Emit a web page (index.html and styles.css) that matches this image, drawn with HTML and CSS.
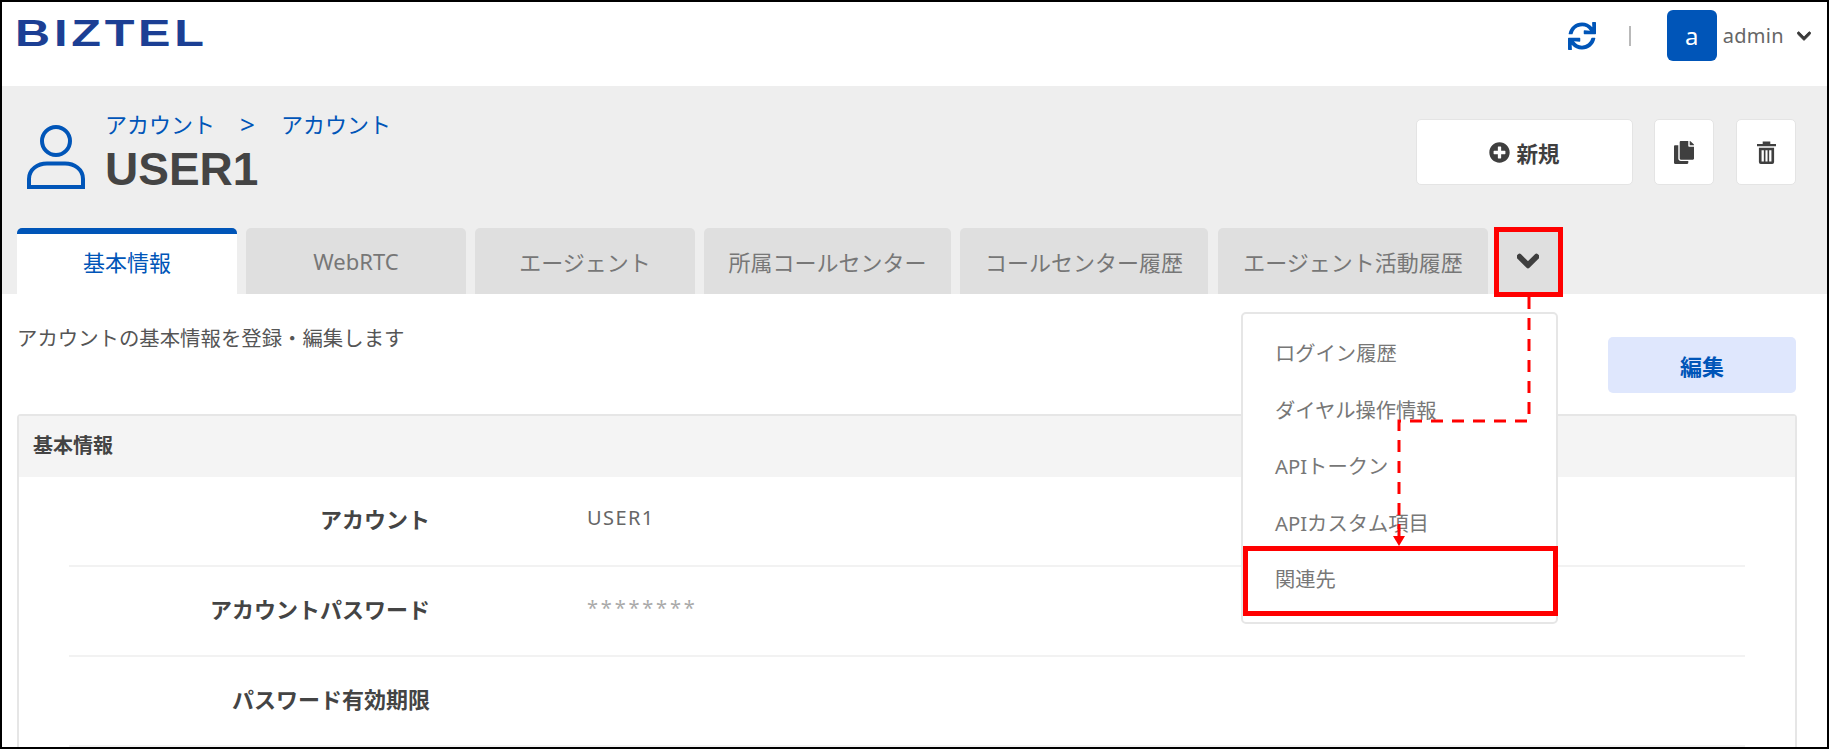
FILE: index.html
```html
<!DOCTYPE html>
<html lang="ja">
<head>
<meta charset="utf-8">
<title>BIZTEL</title>
<link rel="stylesheet" href="styles.css">
</head>
<body>
<div class="frame">
  <header class="topbar">
    <div class="logo"><span class="logo-text">BIZTEL</span></div>
    <div class="top-actions">
      <svg class="sync" viewBox="0 0 512 512"><path d="M440.65 12.57l4 82.77A247.16 247.16 0 0 0 255.83 8C134.73 8 33.91 94.92 12.29 209.82A12 12 0 0 0 24.09 224h49.05a12 12 0 0 0 11.67-9.26 175.91 175.91 0 0 1 317-56.94l-101.46-4.86a12 12 0 0 0-12.57 12v47.41a12 12 0 0 0 12 12H500a12 12 0 0 0 12-12V12a12 12 0 0 0-12-12h-47.37a12 12 0 0 0-11.98 12.57zM255.83 432a175.61 175.61 0 0 1-146-77.8l101.8 4.87a12 12 0 0 0 12.57-12v-47.4a12 12 0 0 0-12-12H12a12 12 0 0 0-12 12V500a12 12 0 0 0 12 12h47.35a12 12 0 0 0 12-12.6l-4.15-82.57A247.17 247.17 0 0 0 255.83 504c121.11 0 221.93-86.92 243.55-201.82a12 12 0 0 0-11.8-14.18h-49.05a12 12 0 0 0-11.67 9.26A175.86 175.86 0 0 1 255.83 432z"/></svg>
      <span class="sep"></span>
      <span class="avatar">a</span>
      <span class="username">admin</span>
      <svg class="chev-small" viewBox="0 0 448 512"><path d="M207.029 381.476L12.686 187.132c-9.373-9.373-9.373-24.569 0-33.941l22.667-22.667c9.357-9.357 24.522-9.375 33.901-.04L224 284.505l154.745-154.021c9.379-9.335 24.544-9.317 33.901.04l22.667 22.667c9.373 9.373 9.373 24.569 0 33.941L240.971 381.476c-9.373 9.372-24.569 9.372-33.942 0z"/></svg>
    </div>
  </header>

  <section class="band">
    <div class="title-row">
      <div class="title-left">
        <svg class="person" viewBox="0 0 58 64"><circle cx="29" cy="16" r="14" /><path d="M2 62V54C2 44 11 38.5 20 38.5H38C47 38.5 56 44 56 54V62Z"/></svg>
        <div class="title-text">
          <div class="crumbs"><span>アカウント</span><span class="crumb-sep">&gt;</span><span>アカウント</span></div>
          <h1 class="title">USER1</h1>
        </div>
      </div>
      <div class="title-buttons">
        <button class="btn btn-new"><svg class="plus" viewBox="0 0 512 512"><path d="M256 8C119 8 8 119 8 256s111 248 248 248 248-111 248-248S393 8 256 8zm144 276c0 6.6-5.4 12-12 12h-92v92c0 6.6-5.4 12-12 12h-56c-6.6 0-12-5.4-12-12v-92h-92c-6.6 0-12-5.4-12-12v-56c0-6.6 5.4-12 12-12h92v-92c0-6.6 5.4-12 12-12h56c6.6 0 12 5.4 12 12v92h92c6.6 0 12 5.4 12 12v56z"/></svg>新規</button>
        <button class="btn btn-icon"><svg class="copy" viewBox="0 0 448 512"><path d="M320 448v40c0 13.255-10.745 24-24 24H24c-13.255 0-24-10.745-24-24V120c0-13.255 10.745-24 24-24h72v296c0 30.879 25.121 56 56 56h168zm0-344V0H152c-13.255 0-24 10.745-24 24v368c0 13.255 10.745 24 24 24h272c13.255 0 24-10.745 24-24V128H344c-13.2 0-24-10.8-24-24zm120.971-31.029L375.029 7.029A24 24 0 0 0 358.059 0H352v96h96v-6.059a24 24 0 0 0-7.029-16.97z"/></svg></button>
        <button class="btn btn-icon"><svg class="trash" viewBox="0 0 20 24"><path fill-rule="evenodd" d="M6 .5H14V3H20V5.5H0V3H6ZM2 7H18V22A2 2 0 0 1 16 24H4A2 2 0 0 1 2 22ZM4.8 9.5V21.5H7.2V9.5ZM8.9 9.5V21.5H11.1V9.5ZM12.8 9.5V21.5H15.2V9.5Z"/></svg></button>
      </div>
    </div>
    <nav class="tabs">
      <a class="tab tab-active">基本情報</a>
      <a class="tab">WebRTC</a>
      <a class="tab">エージェント</a>
      <a class="tab tab-shop">所属コールセンター</a>
      <a class="tab tab-hist">コールセンター履歴</a>
      <a class="tab tab-agent">エージェント活動履歴</a>
      <a class="tab tab-more"><svg class="chev-big" viewBox="0 0 448 512"><path d="M207.029 381.476L12.686 187.132c-9.373-9.373-9.373-24.569 0-33.941l22.667-22.667c9.357-9.357 24.522-9.375 33.901-.04L224 284.505l154.745-154.021c9.379-9.335 24.544-9.317 33.901.04l22.667 22.667c9.373 9.373 9.373 24.569 0 33.941L240.971 381.476c-9.373 9.372-24.569 9.372-33.942 0z"/></svg></a>
    </nav>
  </section>

  <main class="content">
    <div class="intro-row">
      <p class="intro">アカウントの基本情報を登録・編集します</p>
      <button class="btn-edit">編集</button>
    </div>
    <section class="panel">
      <h2 class="panel-head">基本情報</h2>
      <div class="panel-body">
        <div class="row"><div class="label">アカウント</div><div class="value">USER1</div></div>
        <div class="row"><div class="label">アカウントパスワード</div><div class="value value-mask">********</div></div>
        <div class="row"><div class="label">パスワード有効期限</div><div class="value"></div></div>
      </div>
    </section>
  </main>

  <ul class="menu">
    <li>ログイン履歴</li>
    <li>ダイヤル操作情報</li>
    <li>APIトークン</li>
    <li>APIカスタム項目</li>
    <li>関連先</li>
  </ul>
  <span class="mark mark-more"></span>
  <span class="mark mark-item"></span>
  <svg class="route" viewBox="0 0 1829 749">
    <path class="route-line" d="M1529 297V421H1399V536"/>
    <path class="route-head" d="M1393 536H1405L1399 546Z"/>
  </svg>
</div>
</body>
</html>
```
FILE: styles.css
```css
* { box-sizing: border-box; }
html, body { margin: 0; padding: 0; }
body { font-family: "Noto Sans", "Noto Sans CJK JP", sans-serif; color: #444; background: #fff; }
.frame { position: relative; width: 1829px; height: 749px; border: 2px solid #000; overflow: hidden; background: #fff; }

.topbar { height: 84px; display: flex; justify-content: space-between; align-items: flex-start; padding-left: 13px; }
.logo { width: 189px; height: 26px; margin-top: 19px; }
.logo-text { display: block; width: 140px; font-family: "Liberation Sans", sans-serif; font-weight: 700; font-size: 36px; line-height: 26px; color: #1c3f94; letter-spacing: 2.8px; transform: scaleX(1.35); transform-origin: left center; white-space: nowrap; }
.top-actions { display: flex; align-items: center; height: 51px; margin-top: 8px; padding-right: 16px; }
.sync { width: 28px; height: 28px; fill: #0055b8; margin-right: 33px; }
.sep { width: 2px; height: 20px; background: #b9b9b9; margin-right: 36px; }
.avatar { width: 50px; height: 51px; border-radius: 6px; background: #0055b8; color: #fff; font-size: 24px; display: flex; align-items: center; justify-content: center; margin-right: 6px; }
.username { font-size: 20px; color: #666; margin-right: 13px; letter-spacing: 0.3px; }
.chev-small { width: 14px; height: 16px; fill: #3a3a3a; stroke: #3a3a3a; stroke-width: 30; }

.band { height: 208px; background: #eee; display: flex; flex-direction: column; justify-content: space-between; }
.title-row { display: flex; justify-content: space-between; padding: 20px 31px 0 25px; }
.title-left { display: flex; align-items: flex-start; gap: 20px; }
.person { width: 58px; height: 64px; margin-top: 19px; fill: none; stroke: #0055b8; stroke-width: 4; }
.crumbs { display: flex; align-items: center; color: #0055b8; font-size: 22px; line-height: 30px; margin-top: 3px; }
.crumb-sep { font-size: 26px; margin: 0 26px 0 25px; }
.title { margin: 5px 0 0; font-family: "Liberation Sans", sans-serif; font-size: 46px; line-height: 50px; font-weight: 700; color: #444; }
.title-buttons { display: flex; gap: 22px; align-items: flex-start; padding-top: 13px; }
.btn { background: #fff; border: 1px solid #e4e4e4; border-radius: 5px; height: 66px; display: flex; align-items: center; justify-content: center; color: #3f3f3f; font: inherit; font-weight: 700; font-size: 21.5px; padding: 0; }
.btn-new { width: 217px; gap: 6px; margin-right: -1px; }
.btn-icon { width: 60px; }
.plus { width: 21px; height: 21px; fill: #3f3f3f; }
.copy { width: 20px; height: 23px; fill: #3f3f3f; }
.trash { width: 19px; height: 23px; fill: #3f3f3f; }

.tabs { display: flex; gap: 9px; padding-left: 15px; height: 66px; }
.tab { width: 220px; background: #dfdfdf; border-radius: 5px 5px 0 0; color: #777; font-size: 22px; display: flex; align-items: center; justify-content: center; }
.tab-shop { width: 247px; }
.tab-hist { width: 248px; }
.tab-agent { width: 270px; margin-left: 1px; }
.tab-active { background: #fff; color: #0055b8; border-top: 6px solid #0055b8; padding-bottom: 6px; }
.tab-more { width: 68px; margin-left: -3px; }
.chev-big { width: 22px; height: 26px; fill: #3f3f3f; stroke: #3f3f3f; stroke-width: 36; }

.content { padding: 0 30px 0 15px; }
.intro-row { display: flex; justify-content: space-between; align-items: flex-start; height: 120px; padding-top: 43px; }
.intro { margin: -14px 0 0; font-size: 20.4px; line-height: 30px; color: #555; }
.btn-edit { width: 188px; height: 56px; margin-right: 1px; border: 0; border-radius: 5px; background: #dfe7fd; color: #0055b8; font: inherit; font-size: 22px; font-weight: 700; }
.panel { border: 2px solid #e6e6e6; border-radius: 4px 4px 0 0; height: 400px; }
.panel-head { margin: 0; height: 61px; background: #f4f4f4; font-size: 20px; font-weight: 700; line-height: 60px; padding-left: 14px; color: #444; }
.panel-body { padding: 0 50px; }
.row { display: grid; grid-template-columns: 361px 1fr; column-gap: 157px; height: 90px; align-items: center; padding-bottom: 7px; border-bottom: 2px solid #f2f2f2; }
.label { text-align: right; font-size: 22px; font-weight: 700; color: #444; }
.value { font-size: 20px; color: #666; letter-spacing: 1.4px; }
.value-mask { color: #aaa; letter-spacing: 2.8px; }

.menu { position: absolute; left: 1239px; top: 310px; width: 317px; height: 312px; margin: 0; padding: 10px 0 0; list-style: none; background: #fff; border: 2px solid #e6e6e6; border-radius: 5px; }
.menu li { height: 56.5px; display: flex; align-items: center; padding-left: 32px; font-size: 20.3px; color: #777; }
.mark { position: absolute; border: 5px solid #f00; }
.mark-more { left: 1492px; top: 225px; width: 69px; height: 70px; }
.mark-item { left: 1241px; top: 544px; width: 315px; height: 70px; }
.route { position: absolute; left: -2px; top: -2px; width: 1829px; height: 749px; pointer-events: none; }
.route-line { fill: none; stroke: #f00; stroke-width: 3; stroke-dasharray: 12 9; }
.route-head { fill: #f00; }
```
